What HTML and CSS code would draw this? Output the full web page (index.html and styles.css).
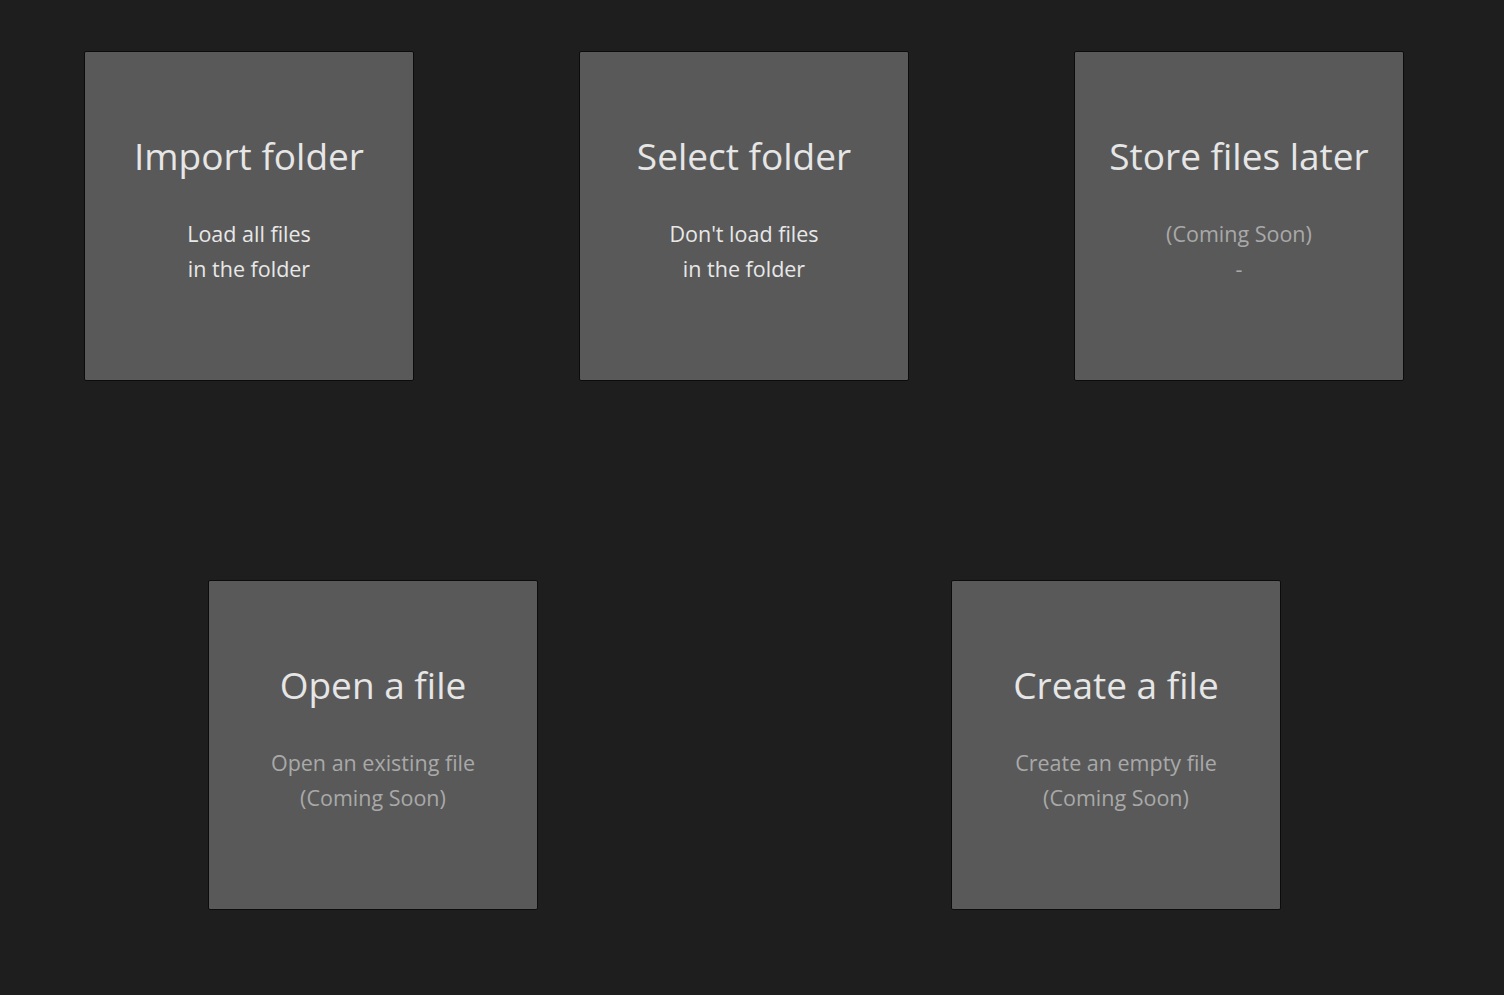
FILE: index.html
```html
<!DOCTYPE html>
<html>
<head>
<meta charset="utf-8">
<link rel="stylesheet" href="styles.css">
</head>
<body>
<main class="page">
  <div class="row row-top">
    <div class="card">
      <div class="title">Import folder</div>
      <div class="desc">Load all files<br>in the folder</div>
    </div>
    <div class="card">
      <div class="title">Select folder</div>
      <div class="desc">Don't load files<br>in the folder</div>
    </div>
    <div class="card">
      <div class="title">Store files later</div>
      <div class="desc muted">(Coming Soon)<br>-</div>
    </div>
  </div>
  <div class="row row-bottom">
    <div class="card">
      <div class="title">Open a file</div>
      <div class="desc muted">Open an existing file<br>(Coming Soon)</div>
    </div>
    <div class="card">
      <div class="title">Create a file</div>
      <div class="desc muted">Create an empty file<br>(Coming Soon)</div>
    </div>
  </div>
</main>
</body>
</html>
```
FILE: styles.css
```css
html, body {
  margin: 0;
  padding: 0;
  background: #1e1e1e;
  height: 100%;
  overflow: hidden;
}
.page {
  font-family: "Open Sans", "Noto Sans", sans-serif;
  padding-top: 51px;
}
.row {
  display: flex;
}
.row-top {
  padding-left: 84px;
  gap: 165px;
}
.row-bottom {
  padding-left: 208px;
  gap: 413px;
  margin-top: 199px;
}
.card {
  box-sizing: border-box;
  width: 330px;
  height: 330px;
  background: #595959;
  border: 1px solid #0c0c0c;
  border-radius: 2px;
  display: flex;
  flex-direction: column;
  align-items: center;
  text-align: center;
  padding-top: 80px;
}
.title {
  font-size: 37px;
  line-height: 48px;
  color: #e6e6e6;
  white-space: nowrap;
}
.desc {
  margin-top: 36px;
  font-size: 21.5px;
  line-height: 35px;
  color: #e8e8e8;
}
.desc.muted {
  color: #a9a9a9;
}
```
